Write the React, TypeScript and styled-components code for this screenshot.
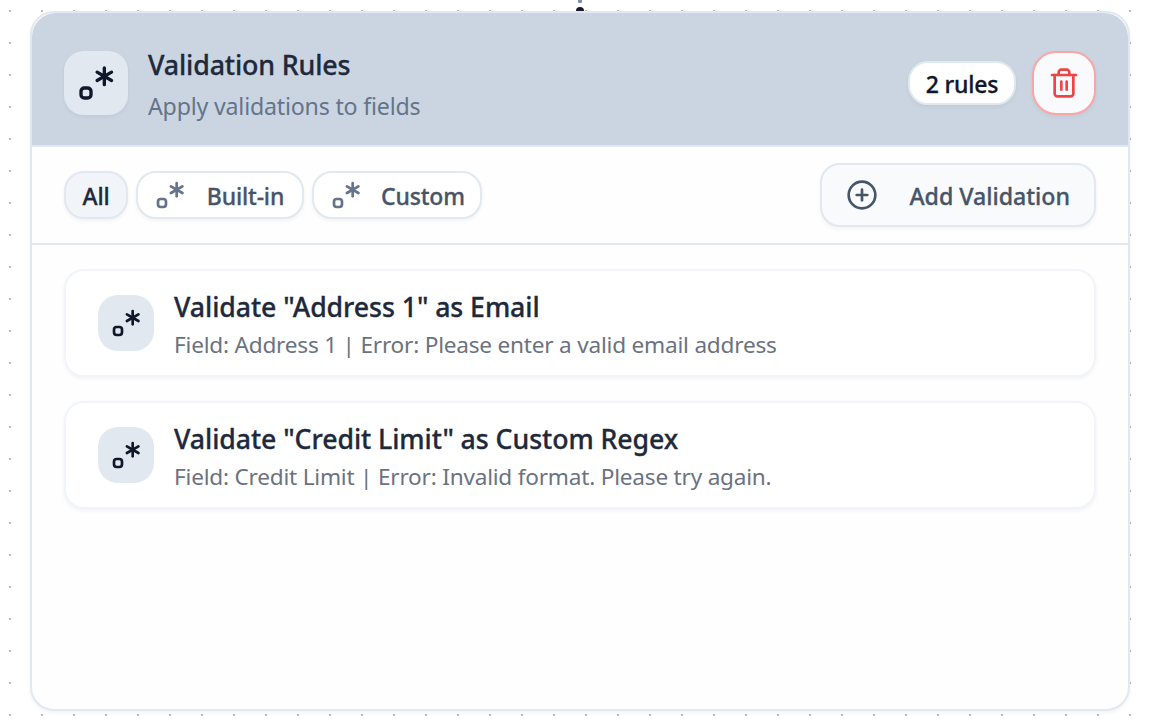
import React from "react";
import styled, { createGlobalStyle, css } from "styled-components";

const GlobalStyle = createGlobalStyle`
  *, *::before, *::after { box-sizing: border-box; }
  body {
    margin: 0;
    background: #fff;
    font-family: "Noto Sans", "Open Sans", sans-serif;
    overflow: hidden;
  }
  button { font-family: inherit; }
`;

const semibold = css`
  font-weight: 500;
  -webkit-text-stroke: 0.3px currentColor;
`;

const Canvas = styled.main`
  position: relative;
  height: 721px;
  padding: 11px 0 0 30px;
  background-color: #fff;
  background-image: radial-gradient(circle at 10px 11px, #b0b0b3 0.6px, transparent 1.4px);
  background-size: 32px 32px;
`;

const Edge = styled.span`
  position: absolute;
  left: 578px;
  top: 0;
  width: 4px;
  height: 3px;
  border-radius: 0 0 1px 1px;
  background: #7e90aa;
`;

const Handle = styled.span`
  position: absolute;
  left: 576px;
  top: 7px;
  width: 8px;
  height: 8px;
  border-radius: 50%;
  background: #1a192b;
`;

const Card = styled.section`
  position: relative;
  display: flex;
  flex-direction: column;
  width: 1100px;
  height: 700px;
  border: 2px solid #e2e8f0;
  border-radius: 24px;
  background: #fefefe;
  box-shadow: 0 2px 4px rgba(0, 0, 0, 0.05);
`;

const Header = styled.header`
  display: flex;
  align-items: center;
  padding: 32px 32px 24px;
  border-bottom: 2px solid #e2e8f0;
  border-radius: 24px 24px 0 0;
  background: #cbd5e1;
`;

const IconTile = styled.div<{ $size: number }>`
  display: flex;
  align-items: center;
  justify-content: center;
  flex: none;
  width: ${(p) => p.$size}px;
  height: ${(p) => p.$size}px;
  border-radius: 20px;
  background: #e2e8f0;
  color: #0f172a;
  ${(p) => p.$size > 60 && css`box-shadow: 0 2px 4px rgba(0, 0, 0, 0.05);`}
`;

const HeaderText = styled.div`
  display: flex;
  flex-direction: column;
  gap: 6px;
  flex: 1;
  height: 76px;
  margin-left: 20px;
`;

const Title = styled.h1`
  margin: 0;
  font-size: 26.8px;
  ${semibold}
  letter-spacing: -0.14px;
  line-height: 40px;
  color: #1e293b;
`;

const Subtitle = styled.p`
  margin: 0;
  font-size: 23.2px;
  letter-spacing: -0.2px;
  line-height: 31px;
  color: #64748b;
`;

const CountBadge = styled.span`
  display: flex;
  align-items: center;
  justify-content: center;
  width: 108px;
  height: 44px;
  padding-top: 2px;
  border: 2px solid #e2e8f0;
  border-radius: 20px;
  background: #fff;
  box-shadow: 0 2px 4px rgba(0, 0, 0, 0.05);
  color: #0f172a;
  font-size: 23px;
  ${semibold}
  letter-spacing: -0.2px;
  white-space: nowrap;
`;

const DeleteButton = styled.button`
  display: flex;
  align-items: center;
  justify-content: center;
  width: 64px;
  height: 64px;
  margin-left: 16px;
  padding: 0;
  border: 2px solid #fca5a5;
  border-radius: 24px;
  background: #f8fafc;
  box-shadow: 0 2px 4px rgba(0, 0, 0, 0.05);
  color: #ef4444;
`;

const Toolbar = styled.div`
  display: flex;
  align-items: center;
  justify-content: space-between;
  padding: 16px 32px;
  border-bottom: 2px solid #e2e8f0;
`;

const Tabs = styled.div`
  display: flex;
  gap: 8px;
`;

const Tab = styled.button<{ $active?: boolean }>`
  display: flex;
  align-items: center;
  gap: 19px;
  height: 48px;
  padding: 0 16px;
  border: 2px solid #e2e8f0;
  border-radius: 20px;
  background: ${(p) => (p.$active ? "#f1f5f9" : "#fff")};
  box-shadow: 0 2px 4px rgba(0, 0, 0, 0.05);
  color: ${(p) => (p.$active ? "#1e293b" : "#475569")};
  font-size: 23px;
  ${semibold}
  letter-spacing: -0.18px;
  white-space: nowrap;

  svg { color: #64748b; }
`;

const TabLabel = styled.span<{ $width: number }>`
  width: ${(p) => p.$width}px;
  padding-top: 2px;
  text-align: center;
`;

const AddButton = styled.button`
  display: flex;
  align-items: center;
  justify-content: space-between;
  width: 276px;
  height: 64px;
  padding: 0 24px;
  border: 2px solid #e2e8f0;
  border-radius: 20px;
  background: #f8fafc;
  box-shadow: 0 2px 4px rgba(0, 0, 0, 0.05);
  color: #475569;
  font-size: 23.2px;
  ${semibold}
  letter-spacing: -0.03px;
  white-space: nowrap;
`;

const AddLabel = styled.span`
  padding-top: 2px;
`;

const RuleList = styled.ul`
  display: flex;
  flex-direction: column;
  gap: 24px;
  margin: 0;
  padding: 24px 32px;
  list-style: none;
`;

const RuleItem = styled.li`
  display: flex;
  align-items: center;
  gap: 20px;
  height: 108px;
  padding: 0 32px;
  border: 2px solid #f1f5f9;
  border-radius: 20px;
  background: #fff;
  box-shadow: 0 2px 4px rgba(0, 0, 0, 0.05);
`;

const RuleText = styled.div`
  padding-top: 4px;
  white-space: nowrap;
`;

const RuleTitle = styled.h2`
  margin: 0;
  font-size: 26.7px;
  ${semibold}
  letter-spacing: -0.07px;
  line-height: 36px;
  color: #1e293b;
`;

const RuleDetail = styled.p`
  margin: 4px 0 0;
  font-size: 22.6px;
  letter-spacing: -0.21px;
  line-height: 32px;
  color: #6b7280;
`;

const Glyph = styled.svg`
  display: block;
  flex: none;
  fill: none;
  stroke: currentColor;
  stroke-width: 2;
  stroke-linecap: round;
  stroke-linejoin: round;
`;

const RegexIcon = ({ size = 32 }: { size?: number }) => (
  <Glyph width={size} height={size} viewBox="0 0 24 24">
    <path d="M17 3v10" />
    <path d="m12.67 5.5 8.66 5" />
    <path d="m12.67 10.5 8.66-5" />
    <path d="M9 17a2 2 0 0 0-2-2H5a2 2 0 0 0-2 2v2a2 2 0 0 0 2 2h2a2 2 0 0 0 2-2v-2z" />
  </Glyph>
);

const TrashIcon = () => (
  <Glyph width={32} height={32} viewBox="0 0 24 24">
    <path d="M3 6h18" />
    <path d="M19 6v14c0 1-1 2-2 2H7c-1 0-2-1-2-2V6" />
    <path d="M8 6V4c0-1 1-2 2-2h4c1 0 2 1 2 2v2" />
    <path d="M10 11v6" />
    <path d="M14 11v6" />
  </Glyph>
);

const PlusCircleIcon = () => (
  <Glyph width={32} height={32} viewBox="0 0 24 24">
    <circle cx="12" cy="12" r="10" />
    <path d="M8 12h8" />
    <path d="M12 8v8" />
  </Glyph>
);

const rules = [
  {
    title: 'Validate "Address 1" as Email',
    detail: "Field: Address 1 | Error: Please enter a valid email address",
  },
  {
    title: 'Validate "Credit Limit" as Custom Regex',
    detail: "Field: Credit Limit | Error: Invalid format. Please try again.",
  },
];

export default function App() {
  return (
    <>
      <GlobalStyle />
      <Canvas>
        <Edge />
        <Handle />
        <Card>
          <Header>
            <IconTile $size={64}>
              <RegexIcon size={40} />
            </IconTile>
            <HeaderText>
              <Title>Validation Rules</Title>
              <Subtitle>Apply validations to fields</Subtitle>
            </HeaderText>
            <CountBadge>{rules.length} rules</CountBadge>
            <DeleteButton aria-label="Delete">
              <TrashIcon />
            </DeleteButton>
          </Header>
          <Toolbar>
            <Tabs>
              <Tab $active>
                <TabLabel $width={28}>All</TabLabel>
              </Tab>
              <Tab>
                <RegexIcon />
                <TabLabel $width={81}>Built-in</TabLabel>
              </Tab>
              <Tab>
                <RegexIcon />
                <TabLabel $width={83}>Custom</TabLabel>
              </Tab>
            </Tabs>
            <AddButton>
              <PlusCircleIcon />
              <AddLabel>Add Validation</AddLabel>
            </AddButton>
          </Toolbar>
          <RuleList>
            {rules.map((rule) => (
              <RuleItem key={rule.title}>
                <IconTile $size={56}>
                  <RegexIcon />
                </IconTile>
                <RuleText>
                  <RuleTitle>{rule.title}</RuleTitle>
                  <RuleDetail>{rule.detail}</RuleDetail>
                </RuleText>
              </RuleItem>
            ))}
          </RuleList>
        </Card>
      </Canvas>
    </>
  );
}
